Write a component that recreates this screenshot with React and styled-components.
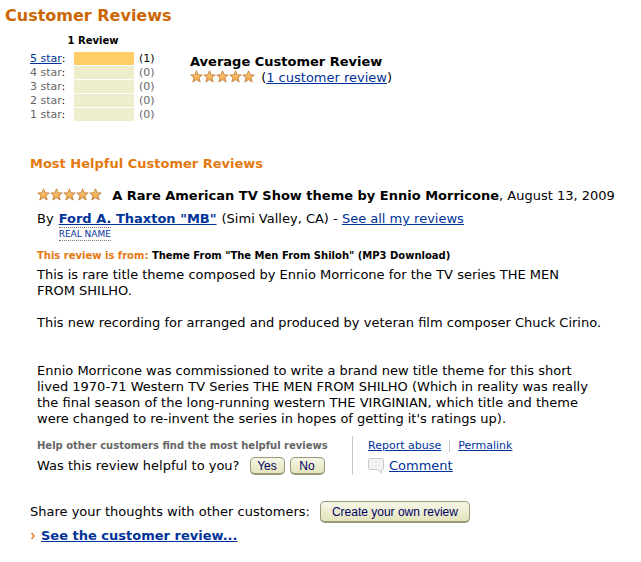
import React from 'react';
import styled, { createGlobalStyle } from 'styled-components';

const colors = {
  bar: '#eeeecc',
  barFull: '#ffcc66',
  grey: '#666666',
  heading: '#cc6600',
  link: '#003399',
  orange: '#e47911',
  rule: '#c8c8c8',
};

const GlobalStyle = createGlobalStyle`
  body {
    margin: 0;
    background: #fff;
    color: #000;
    font-family: Verdana, 'DejaVu Sans', sans-serif;
    font-size: 13px;
    line-height: 16px;
  }
`;

const Page = styled.main`
  padding: 6px 16px 16px 30px;
`;

const Heading = styled.h1`
  margin: 0 0 8px -25px;
  color: ${colors.heading};
  font-size: 16px;
  line-height: 20px;
`;

const Summary = styled.section`
  display: flex;
  align-items: flex-start;
  gap: 34px;
  margin-bottom: 34px;
`;

const Histogram = styled.table`
  border-collapse: collapse;
  font-size: 11px;
  line-height: 13px;

  caption {
    padding-bottom: 5px;
    font-size: 10px;
    font-weight: bold;
  }

  th,
  td {
    padding: 0 0 1px;
    font-weight: normal;
    text-align: left;
  }
`;

const StarLabel = styled.th`
  width: 44px;
  color: ${({ $muted }) => ($muted ? colors.grey : '#000')};
`;

const Colon = styled.span`
  color: #000;
`;

const Bar = styled.div`
  width: 60px;
  height: 13px;
  background: ${({ $full }) => ($full ? colors.barFull : colors.bar)};
`;

const Count = styled.span`
  display: block;
  width: 17px;
  margin-left: 5px;
  color: ${({ $muted }) => ($muted ? colors.grey : '#000')};
`;

const Average = styled.div`
  padding-top: 20px;
`;

const Link = styled.a`
  color: ${colors.link};
  font-weight: ${({ $bold }) => ($bold ? 'bold' : 'normal')};
  text-decoration: underline;
`;

const StarRow = styled.svg`
  width: 65px;
  height: 13px;
  margin-right: 2px;
  vertical-align: -1px;
`;

const SectionTitle = styled.h2`
  margin: 0 0 16px;
  color: ${colors.orange};
  font-size: 13px;
  line-height: 16px;
`;

const Review = styled.article`
  padding-left: 7px;
`;

const ReviewTitle = styled.div`
  margin-bottom: 7px;

  strong {
    margin-left: 4px;
  }
`;

const Byline = styled.div`
  display: flex;
  align-items: flex-start;
  gap: 5px;
`;

const Author = styled.div`
  display: flex;
  flex-direction: column;
  align-items: flex-start;
`;

const RealName = styled.a`
  border: dotted #777;
  border-width: 1px 0;
  color: ${colors.link};
  font-size: 9px;
  line-height: 12px;
  text-decoration: none;
  text-transform: uppercase;
`;

const Source = styled.div`
  margin: 8px 0 4px;
  font-size: 10px;
  font-weight: bold;
  line-height: 14px;

  span {
    color: ${colors.orange};
  }
`;

const Body = styled.p`
  margin: 0 0 ${({ $gap }) => $gap}px;
`;

const Feedback = styled.div`
  display: flex;
  margin-bottom: 26px;
`;

const Vote = styled.div`
  width: 290px;
  padding-right: 25px;
  border-right: 1px solid ${colors.rule};
`;

const VoteTitle = styled.div`
  margin-bottom: 3px;
  padding-top: 2px;
  color: ${colors.grey};
  font-size: 10px;
  font-weight: bold;
  white-space: nowrap;
`;

const ButtonRow = styled.div`
  display: flex;
  align-items: center;
  gap: 5px;
`;

const Prompt = styled.span`
  margin-right: 5px;
`;

const Button = styled.button`
  min-width: 35px;
  height: ${({ $large }) => ($large ? 22 : 18)}px;
  padding: 0 ${({ $large }) => ($large ? 11 : 6)}px;
  border: 1px solid #999977;
  border-bottom-width: 2px;
  border-radius: 5px;
  background: linear-gradient(#f6f6e8, #e4e4bc);
  color: #000066;
  font-family: 'Liberation Sans', Arial, sans-serif;
  font-size: 12px;
  line-height: 14px;
`;

const Actions = styled.div`
  padding: 2px 0 0 15px;
`;

const SmallLinks = styled.div`
  display: flex;
  align-items: center;
  margin-bottom: 4px;
  font-size: 11px;
`;

const Divider = styled.span`
  width: 1px;
  height: 12px;
  margin: 0 8px;
  background: ${colors.rule};
`;

const CommentRow = styled.div`
  display: flex;
  gap: 5px;
`;

const Share = styled(ButtonRow)`
  margin-bottom: 5px;
`;

const More = styled.div`
  display: flex;
  align-items: center;
  gap: 5px;
`;

const ratings = [
  { stars: 5, count: 1 },
  { stars: 4, count: 0 },
  { stars: 3, count: 0 },
  { stars: 2, count: 0 },
  { stars: 1, count: 0 },
];

const Stars = () => (
  <StarRow viewBox="0 0 65 13" role="img" aria-label="5 out of 5 stars">
    <defs>
      <linearGradient id="star" x1="0" y1="0" x2="0" y2="1">
        <stop offset="0" stopColor="#fcd080" />
        <stop offset="1" stopColor="#f0a040" />
      </linearGradient>
    </defs>
    {[0, 13, 26, 39, 52].map(x => (
      <path
        key={x}
        transform={`translate(${x} 0)`}
        d="M6.5 0.8L8 4.8L12.2 5L8.9 7.7L10.2 12L6.5 9.6L2.8 12L4.1 7.7L0.8 5L5 4.8Z"
        fill="url(#star)"
        stroke="#c08040"
        strokeWidth="0.9"
        strokeLinejoin="round"
      />
    ))}
  </StarRow>
);

const CommentIcon = () => (
  <svg width="16" height="16" viewBox="0 0 16 16" aria-hidden="true">
    <path
      d="M1.5 0.5H14.5Q15.5 0.5 15.5 1.5V10.5Q15.5 11.5 14.5 11.5H13.5V15L9.5 11.5H1.5Q0.5 11.5 0.5 10.5V1.5Q0.5 0.5 1.5 0.5Z"
      fill="#f4f4f4"
      stroke="#c8c8c8"
    />
    <path d="M3 4.5H13M3 7.5H12" stroke="#e0e0e0" strokeDasharray="3 1" />
  </svg>
);

const Arrow = () => (
  <svg width="6" height="8" viewBox="0 0 6 8" aria-hidden="true">
    <path d="M1.5 1L4 4L1.5 7" fill="none" stroke="#f08030" strokeWidth="1.6" />
  </svg>
);

const RatingRow = ({ stars, count }) => (
  <tr>
    <StarLabel scope="row" $muted={!count}>
      {count ? <Link href="#reviews">{stars} star</Link> : `${stars} star`}
      <Colon>:</Colon>
    </StarLabel>
    <td><Bar $full={count > 0} /></td>
    <td><Count $muted={!count}>({count})</Count></td>
  </tr>
);

const App = () => (
  <Page>
    <GlobalStyle />
    <Heading>Customer Reviews</Heading>
    <Summary>
      <Histogram>
        <caption>1 Review</caption>
        <tbody>
          {ratings.map(rating => <RatingRow key={rating.stars} {...rating} />)}
        </tbody>
      </Histogram>
      <Average>
        <strong>Average Customer Review</strong>
        <div>
          <Stars /> (<Link href="#reviews">1 customer review</Link>)
        </div>
      </Average>
    </Summary>

    <SectionTitle id="reviews">Most Helpful Customer Reviews</SectionTitle>
    <Review>
      <ReviewTitle>
        <Stars />{' '}
        <strong>A Rare American TV Show theme by Ennio Morricone</strong>, August 13, 2009
      </ReviewTitle>
      <Byline>
        <span>By</span>
        <Author>
          <Link $bold href="#author">Ford A. Thaxton &quot;MB&quot;</Link>
          <RealName href="#real-name">Real Name</RealName>
        </Author>
        <span>(Simi Valley, CA) - <Link href="#all">See all my reviews</Link></span>
      </Byline>
      <Source>
        <span>This review is from:</span> Theme From &quot;The Men From Shiloh&quot; (MP3 Download)
      </Source>
      <Body $gap={16}>
        This is rare title theme composed by Ennio Morricone for the TV series THE MEN
        <br />
        FROM SHILHO.
      </Body>
      <Body $gap={32}>
        This new recording for arranged and produced by veteran film composer Chuck Cirino.
      </Body>
      <Body $gap={9}>
        Ennio Morricone was commissioned to write a brand new title theme for this short
        <br />
        lived 1970-71 Western TV Series THE MEN FROM SHILHO (Which in reality was really
        <br />
        the final season of the long-running western THE VIRGINIAN, which title and theme
        <br />
        were changed to re-invent the series in hopes of getting it&apos;s ratings up).
      </Body>
      <Feedback>
        <Vote>
          <VoteTitle>Help other customers find the most helpful reviews</VoteTitle>
          <ButtonRow>
            <Prompt>Was this review helpful to you?</Prompt>
            <Button type="button">Yes</Button>
            <Button type="button">No</Button>
          </ButtonRow>
        </Vote>
        <Actions>
          <SmallLinks>
            <Link href="#report">Report abuse</Link>
            <Divider />
            <Link href="#permalink">Permalink</Link>
          </SmallLinks>
          <CommentRow>
            <CommentIcon />
            <Link href="#comment">Comment</Link>
          </CommentRow>
        </Actions>
      </Feedback>
    </Review>

    <Share>
      <Prompt>Share your thoughts with other customers:</Prompt>
      <Button type="button" $large>Create your own review</Button>
    </Share>
    <More>
      <Arrow />
      <Link $bold href="#reviews">See the customer review...</Link>
    </More>
  </Page>
);

export default App;
